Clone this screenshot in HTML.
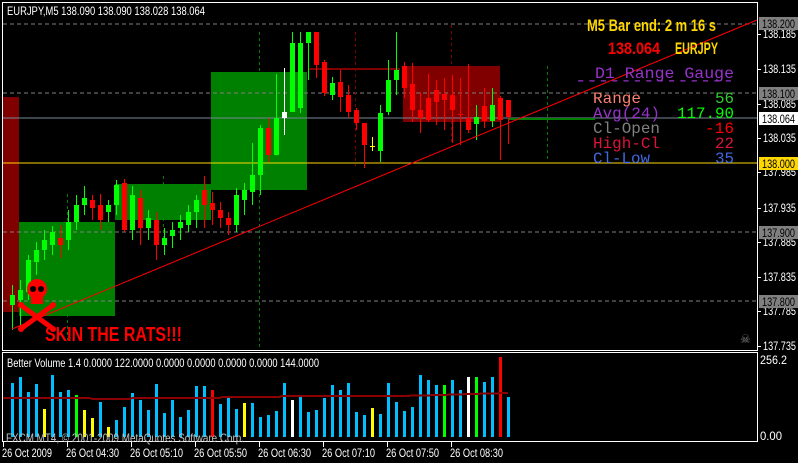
<!DOCTYPE html>
<html><head><meta charset="utf-8"><style>
html,body{margin:0;padding:0;background:#000;width:798px;height:463px;overflow:hidden}
svg{display:block}
text{font-family:"Liberation Sans",sans-serif}
.mono{font-family:"Liberation Mono",monospace;font-size:16px}
.imp{font-family:"Liberation Sans Narrow","Liberation Sans",sans-serif;font-weight:bold}
</style></head><body>
<svg id="s" width="798" height="463" viewBox="0 0 798 463" xmlns="http://www.w3.org/2000/svg" shape-rendering="crispEdges">
<rect width="798" height="463" fill="#000"/>
<rect x="3" y="97" width="16" height="215" fill="#800000"/>
<rect x="19" y="222" width="96" height="94" fill="#008000"/>
<rect x="115" y="184" width="96" height="36" fill="#008000"/>
<rect x="211" y="72" width="96" height="118" fill="#008000"/>
<rect x="403" y="66" width="97" height="56" fill="#800000"/>
<g stroke="#808080" stroke-dasharray="4,3">
<line x1="3" y1="24" x2="757" y2="24"/><line x1="3" y1="93" x2="757" y2="93"/>
<line x1="3" y1="232" x2="757" y2="232"/><line x1="3" y1="301" x2="757" y2="301"/>
</g>
<g stroke-dasharray="3,3">
<line x1="259.5" y1="32" x2="259.5" y2="350" stroke="#008000"/>
<line x1="355.5" y1="32" x2="355.5" y2="166" stroke="#800000"/>
<line x1="451.5" y1="25" x2="451.5" y2="143" stroke="#800000"/>
<line x1="547.5" y1="66" x2="547.5" y2="160" stroke="#008000"/>
<line x1="67.5" y1="194" x2="67.5" y2="340" stroke="#008000"/>
<line x1="163.5" y1="176" x2="163.5" y2="240" stroke="#008000"/>
</g>
<line x1="308" y1="69" x2="400" y2="69" stroke="#800000" stroke-width="2"/>
<line x1="3" y1="118" x2="757" y2="118" stroke="#778899"/>
<line x1="3" y1="163" x2="757" y2="163" stroke="#ffd700"/>
<line x1="508" y1="119" x2="595" y2="119" stroke="#008000" stroke-width="2"/>
<g id="candles"></g>
<line x1="12" y1="329" x2="757" y2="20" stroke="#ff0000" shape-rendering="auto"/>
<rect x="2.5" y="2.5" width="755" height="348" fill="none" stroke="#fff"/>
<rect x="2.5" y="352.5" width="755" height="89" fill="none" stroke="#fff"/>
<g id="vol"></g>
<g font-size="12" fill="#fff" id="axis"></g>
<text x="7" y="15" font-size="12" fill="#fff" textLength="198" lengthAdjust="spacingAndGlyphs">EURJPY,M5  138.090 138.090 138.028 138.064</text>
<text x="7" y="367" font-size="12" fill="#fff" textLength="312" lengthAdjust="spacingAndGlyphs">Better Volume 1.4 0.0000 122.0000 0.0000 0.0000 0.0000 0.0000 144.0000</text>
<text x="6" y="442" font-size="12" fill="#c0c0c0" textLength="238" lengthAdjust="spacingAndGlyphs">FXCM MT4, © 2001-2009 MetaQuotes Software Corp.</text>
<text class="imp" x="587" y="31" font-size="17" fill="#ffd700" textLength="129" lengthAdjust="spacingAndGlyphs">M5 Bar end: 2 m 16 s</text>
<text class="imp" x="608" y="54" font-size="17" fill="#ff0000" textLength="52" lengthAdjust="spacingAndGlyphs">138.064</text>
<text class="imp" x="675" y="54" font-size="17" fill="#ffd700" textLength="43" lengthAdjust="spacingAndGlyphs">EURJPY</text>
<g>
<text x="595" y="78" fill="#9932cc" textLength="139" lengthAdjust="spacingAndGlyphs" class="mono">D1 Range Gauge</text>
<text x="575" y="85" fill="#9932cc" textLength="159" lengthAdjust="spacingAndGlyphs" class="mono">--------------</text>
<text x="593" y="103" fill="#fa8072" class="mono" textLength="48" lengthAdjust="spacingAndGlyphs">Range</text><text x="734" y="103" text-anchor="end" fill="#32cd32" class="mono" textLength="19" lengthAdjust="spacingAndGlyphs">56</text>
<text x="593" y="118" fill="#9932cc" class="mono" textLength="67" lengthAdjust="spacingAndGlyphs">Avg(24)</text><text x="734" y="118" text-anchor="end" fill="#00ff00" class="mono" textLength="57" lengthAdjust="spacingAndGlyphs">117.90</text>
<text x="593" y="133" fill="#808080" class="mono" textLength="67" lengthAdjust="spacingAndGlyphs">Cl-Open</text><text x="734" y="133" text-anchor="end" fill="#ff0000" class="mono" textLength="29" lengthAdjust="spacingAndGlyphs">-16</text>
<text x="593" y="148" fill="#dc143c" class="mono" textLength="67" lengthAdjust="spacingAndGlyphs">High-Cl</text><text x="734" y="148" text-anchor="end" fill="#dc143c" class="mono" textLength="19" lengthAdjust="spacingAndGlyphs">22</text>
<text x="593" y="163" fill="#4169e1" class="mono" textLength="57" lengthAdjust="spacingAndGlyphs">Cl-Low</text><text x="734" y="163" text-anchor="end" fill="#4169e1" class="mono" textLength="19" lengthAdjust="spacingAndGlyphs">35</text>
</g>
<g fill="#ff0000" shape-rendering="auto">
<circle cx="37" cy="289" r="10"/><rect x="31" y="295" width="12" height="9"/>
<circle cx="33" cy="289" r="3" fill="#000"/><circle cx="41" cy="289" r="3" fill="#000"/>
<path d="M22 306 L52 328 M52 306 L22 328" stroke="#ff0000" stroke-width="5"/>
<circle cx="21" cy="305" r="3"/><circle cx="53" cy="305" r="3"/><circle cx="21" cy="329" r="3"/><circle cx="53" cy="329" r="3"/>
</g>
<text class="imp" x="45" y="341" font-size="20" fill="#ff0000" textLength="137" lengthAdjust="spacingAndGlyphs">SKIN THE RATS!!!</text>
<text x="740" y="343" font-size="12" fill="#808080">☠</text>
<g font-size="12" fill="#fff" id="time"></g>
</svg>
<script>
var NS="http://www.w3.org/2000/svg";
function el(p,t,a,txt){var e=document.createElementNS(NS,t);for(var k in a)e.setAttribute(k,a[k]);if(txt)e.textContent=txt;p.appendChild(e);return e;}
var C=[[305,295,285,330],[300,290,280,330],[292,260,255,300],[262,250,242,275],[250,240,230,260],[245,232,226,255],[238,245,225,258],[240,222,210,250],[222,205,195,230],[205,198,186,215],[200,208,195,220],[205,220,194,230],[212,205,200,222],[205,185,180,215],[183,230,179,232],[230,195,186,240],[198,228,190,245],[228,218,210,240],[220,245,212,260],[245,238,228,255],[236,230,222,248],[228,222,215,240],[225,212,205,232],[212,200,195,228],[190,205,176,228],[203,210,192,225],[210,218,202,228],[218,225,212,235],[225,195,188,232],[200,190,183,215],[192,175,143,205],[175,128,125,195],[128,155,118,162],[155,118,74,155],[118,112,68,135],[112,43,32,112],[108,43,32,113],[43,32,32,80],[32,65,32,78],[62,93,60,96],[95,83,77,100],[82,97,70,112],[95,112,85,118],[110,123,108,130],[123,145,123,168],[146,147,137,151],[151,113,105,162],[112,80,60,115],[80,70,32,95],[66,88,62,98],[84,110,63,122],[110,118,92,133],[98,120,74,122],[90,102,80,125],[94,100,78,130],[95,110,75,143],[114,115,78,145],[118,130,64,133],[124,117,105,140],[106,121,88,128],[121,105,88,127],[98,120,96,160],[100,117,100,144]];
var cg=document.getElementById("candles");
C.forEach(function(c,i){var x=12+8*i;var up=c[1]<c[0];var col=up?"#00ff00":"#ff0000";
 if(i==34)col="#ffffff";
 if(i==45)col="#ffff00";
 el(cg,"line",{x1:x+.5,x2:x+.5,y1:c[2],y2:c[3],stroke:col});
 var t=Math.min(c[0],c[1]),h=Math.max(1,Math.abs(c[0]-c[1]));
 el(cg,"rect",{x:x-2,y:t,width:5,height:h,fill:col});});
var V=[383,377,392,384,409,375,392,390,395,410,418,402,427,420,407,393,400,410,384,413,400,417,410,386,386,390,404,397,409,403,403,417,415,411,383,400,396,412,410,398,385,390,383,412,415,408,414,383,402,411,407,375,380,385,385,380,390,377,377,382,377,357,397];
var VC={4:"#ffff00",8:"#00ff00",9:"#ffff00",10:"#ffff00",12:"#ffff00",25:"#ff0000",29:"#ffff00",35:"#ffffff",45:"#ffff00",54:"#00ff00",57:"#ffffff",58:"#00ff00",61:"#ff0000"};
var vg=document.getElementById("vol");
V.forEach(function(y,i){var x=12+8*i-1;el(vg,"rect",{x:x,y:y,width:3,height:437-y,fill:VC[i]||"#00bfff"});});
el(vg,"polyline",{points:"3,398 90,398 92,399 130,399 132,398 220,398 222,397 280,397 282,396 400,396 440,395 470,394 508,393",fill:"none",stroke:"#8b0000","stroke-width":2});
var ax=document.getElementById("axis");
function at(p,x,y,t,f){var a={x:x,y:y,textLength:33,lengthAdjust:"spacingAndGlyphs"};if(f)a.fill=f;el(p,"text",a,t);}
[["138.185",34],["138.135",69],["138.085",104],["138.035",138],["137.985",172],["137.935",208],["137.885",242],["137.835",277],["137.785",311],["137.735",346]].forEach(function(a){el(ax,"line",{x1:757,x2:761,y1:a[1]+.5,y2:a[1]+.5,stroke:"#fff"});at(ax,763,a[1]+4,a[0]);});
[["138.200",23,"#808080","#000"],["138.100",93,"#808080","#000"],["138.064",118,"#ffffff","#000"],["138.000",163,"#ffd700","#000"],["137.900",232,"#808080","#000"],["137.800",301,"#808080","#000"]].forEach(function(a){el(ax,"rect",{x:759,y:a[1]-6,width:39,height:13,fill:a[2]});at(ax,762,a[1]+5,a[0],a[3]);});
el(ax,"text",{x:760,y:364,textLength:27,lengthAdjust:"spacingAndGlyphs"},"256.2");el(ax,"text",{x:760,y:440,textLength:22,lengthAdjust:"spacingAndGlyphs"},"0.00");
var tg=document.getElementById("time");
["26 Oct 2009","26 Oct 04:30","26 Oct 05:10","26 Oct 05:50","26 Oct 06:30","26 Oct 07:10","26 Oct 07:50","26 Oct 08:30"].forEach(function(t,i){var x=i==0?3:67+64*(i-1);el(tg,"line",{x1:x+.5,x2:x+.5,y1:442,y2:447,stroke:"#fff"});el(tg,"text",{x:i==0?2:x-1,y:457,textLength:i==0?50:53,lengthAdjust:"spacingAndGlyphs"},t);});
</script>
</body></html>
